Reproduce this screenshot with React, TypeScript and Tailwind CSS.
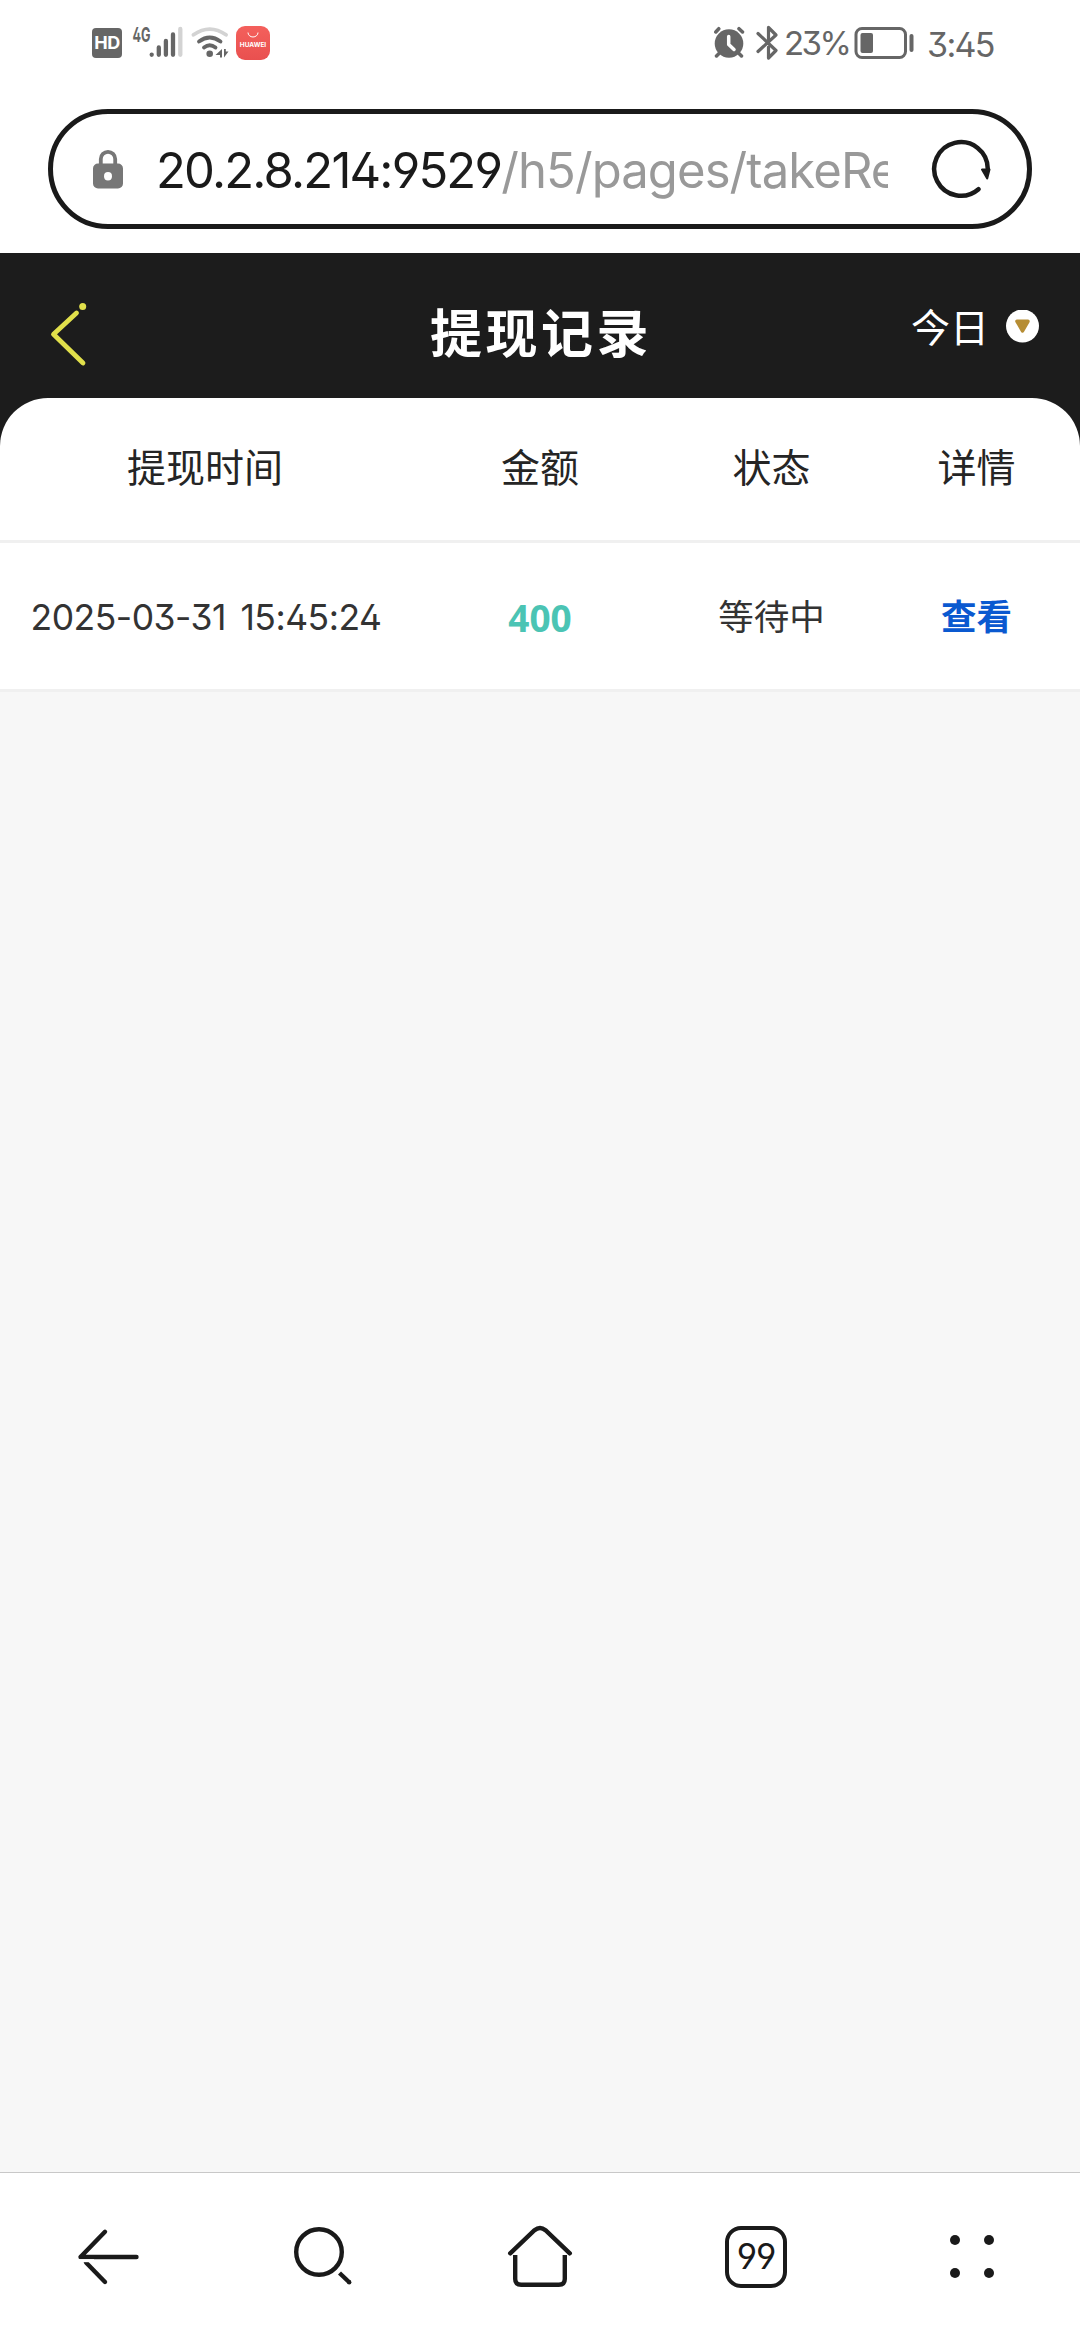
import React from "react";

const columns = ["提现时间", "金额", "状态", "详情"];

const records = [
  { id: 1, time: "2025-03-31 15:45:24", amount: 400, status: "等待中" },
];

const grid = "grid grid-cols-[410px_260px_203px_207px] items-center text-center";

function StatusBar() {
  return (
    <div className="flex h-[85px] items-center justify-between pr-[87px] pl-[92px] text-[#666]">
      <div className="flex items-center">
        <div className="flex h-[30px] w-[30px] items-center justify-center rounded-[4px] bg-[#666] text-[18px] font-bold tracking-[-0.500px] text-white">
          HD
        </div>
        <svg className="ml-[10px] overflow-visible" width="52" height="34" viewBox="0 0 52 34">
          <text x="0.5" y="16" fontSize="20" fontWeight="700" fill="#666" textLength="18" lengthAdjust="spacingAndGlyphs">4G</text>
          <g strokeWidth="4.3" strokeLinecap="round" stroke="#666">
            <path d="M19.700 28.600v.2M26.800 21.500v7.300M33.900 15v13.800M41 8.500v20.300" />
            <path stroke="#d3d3d3" d="M48.300 3v25.800" />
          </g>
        </svg>
        <svg className="ml-[7px]" width="38" height="34" viewBox="0 0 38 34" fill="none" strokeWidth="3.800" strokeLinecap="round">
          <path stroke="#d3d3d3" d="M2.500 8.800Q18.700 -2.500 35 8.800" />
          <path stroke="#666" d="M8 15.500Q18.700 7.500 29.500 15.500M13 21.500Q18.700 17 24.500 21.500" />
          <circle cx="18.700" cy="27.700" r="3.300" fill="#666" />
          <path fill="#666" d="M31 23v8.500h-2v-2.500h-4.500zM33 31.500v-8.500h1.800v2.500h2.700z" />
        </svg>
        <div className="ml-[7px] flex h-[34px] w-[34px] flex-col items-center rounded-[9px] bg-gradient-to-b from-[#f4605c] to-[#e9504f] text-white">
          <svg className="mt-[5px]" width="14" height="8" viewBox="0 0 14 8" fill="none" stroke="#fff" strokeWidth="1">
            <path d="M2 1.500a5 4.500 0 0 0 10 0" />
          </svg>
          <span className="mt-[3px] text-[6.500px] leading-[7px] font-bold">HUAWEI</span>
        </div>
      </div>

      <div className="flex items-center">
        <svg width="34" height="34" viewBox="0 0 34 34" fill="none" strokeLinecap="round" strokeLinejoin="round">
          <circle cx="15" cy="17.500" r="14.300" fill="#666" />
          <path stroke="#666" strokeWidth="3.500" d="M1.800 6l3-3.300M28.500 6l-3.500-3.300M5 27.500l-2.500 2.500M25 27.500l2.500 2.500" />
          <path stroke="#fff" strokeWidth="3.500" d="M14.700 10.500v8l5.300 5" />
        </svg>
        <svg className="ml-[8px]" width="24" height="36" viewBox="0 0 24 36" fill="none" stroke="#666" strokeWidth="3.200" strokeLinecap="round" strokeLinejoin="round">
          <path d="M2 8.500L20 25.500L12.500 33V22M2 26.500L20 10L12.500 2.500V14" />
        </svg>
        <span className="mt-[3px] ml-[4px] w-[63px] text-[33px] tracking-[-2.600px] whitespace-nowrap">23%</span>
        <svg className="ml-[7px]" width="60" height="34" viewBox="0 0 60 34">
          <rect x="2" y="2.500" width="49.500" height="29" rx="6" fill="none" stroke="#666" strokeWidth="3" />
          <rect x="6.500" y="7" width="12.500" height="20" rx="2" fill="#666" />
          <rect x="55.500" y="8" width="4" height="18" rx="2" fill="#666" />
        </svg>
        <span className="mt-[3px] ml-[13px] w-[66px] text-[34px] tracking-[-1.700px] whitespace-nowrap">3:45</span>
      </div>
    </div>
  );
}

function AddressBar() {
  return (
    <div className="mx-[48px] mt-[24px] flex h-[120px] items-center rounded-full border-[5px] border-[#1a1a1a] pl-[39px] text-[49px]">
      <svg className="shrink-0" width="32" height="40" viewBox="0 0 32 40">
        <path d="M8.800 16V10a7.200 7.200 0 0 1 14.400 0v6" fill="none" stroke="#777" strokeWidth="3.800" />
        <path fillRule="evenodd" fill="#777" d="M6 14.500h20a5 5 0 0 1 5 5v15a5 5 0 0 1-5 5h-20a5 5 0 0 1-5-5v-15a5 5 0 0 1 5-5zM16 23a4 4.200 0 1 0 0 8.400a4 4.200 0 1 0 0-8.400z" />
      </svg>
      <div className="mt-[4px] ml-[32px] w-[732px] overflow-hidden whitespace-nowrap">
        <span className="tracking-[-1.800px] text-[#1a1a1a]">20.2.8.214:9529</span>
        <span className="tracking-[-0.900px] text-[#999]">/h5/pages/takeRecord</span>
      </div>
      <svg className="ml-[42px] shrink-0" width="62" height="62" viewBox="0 0 62 62" fill="none" stroke="#1a1a1a" strokeWidth="4.500" strokeLinecap="round">
        <path d="M48.500 51.200A26.800 26.800 0 1 1 57.800 31" />
        <path fill="#1a1a1a" strokeWidth="2" strokeLinejoin="round" d="M52 31.500h7.500l-2.300 9z" />
      </svg>
    </div>
  );
}

function PageHeader() {
  return (
    <div className="grid h-[145px] grid-cols-[1fr_auto_1fr] items-start text-white">
      <svg className="mt-[48px] ml-[48px]" width="42" height="66" viewBox="0 0 42 66" fill="none">
        <circle cx="34.700" cy="5.400" r="3.500" fill="#e1e04b" />
        <path d="M28.500 12L5.500 33.300L35 62" stroke="#e1e04b" strokeWidth="4.800" strokeLinecap="round" strokeLinejoin="round" />
      </svg>
      <h1 className="mt-[46px] pl-[2px] text-[52px] leading-[72px] font-bold tracking-[3.500px]">提现记录</h1>
      <div className="mt-[48px] flex items-center justify-end pr-[41px]">
        <span className="mt-[2px] text-[39px] leading-[50px]">今日</span>
        <svg className="ml-[16px]" width="34" height="34" viewBox="0 0 34 34">
          <circle cx="17.500" cy="16" r="16.500" fill="#fff" />
          <path d="M12 11.300h11l-5.500 9.700z" fill="#b68d34" stroke="#b68d34" strokeWidth="3.500" strokeLinejoin="round" />
        </svg>
      </div>
    </div>
  );
}

function BottomNav() {
  return (
    <nav className="grid h-[168px] grid-cols-5 items-center justify-items-center border-t border-[#c8c8c8] bg-white">
      <svg width="64" height="64" viewBox="0 0 64 64" fill="none" stroke="#1a1a1a" strokeWidth="4.400" strokeLinecap="round">
        <path strokeLinejoin="round" d="M60.500 32H4.500L29 6.800" />
        <path d="M10 37.500L29 57" />
        <path stroke="#fff" strokeWidth="3" strokeLinecap="butt" d="M4 35.700h14" />
      </svg>
      <svg width="64" height="64" viewBox="0 0 64 64" fill="none" stroke="#1a1a1a" strokeWidth="4.400">
        <circle cx="27" cy="27" r="22.800" />
        <path d="M47.500 48L57.500 57.500" />
        <circle cx="57.200" cy="57.200" r="2.200" fill="#1a1a1a" stroke="none" />
      </svg>
      <svg width="66" height="64" viewBox="0 0 66 64" fill="none" stroke="#1a1a1a" strokeWidth="4.400" strokeLinecap="round">
        <path d="M3.200 28.300L27.500 5.200q5.500-4.500 11 0L62.800 28.300" />
        <path strokeLinecap="butt" d="M8.200 30V54q0 5.700 6 5.700H51.800q6 0 6-5.700V30" />
      </svg>
      <div className="flex h-[62px] w-[62px] items-center justify-center rounded-[16px] border-[4.500px] border-[#1a1a1a] text-[35px] leading-none tracking-[-1px] text-[#1a1a1a]">
        99
      </div>
      <div className="grid grid-cols-2 gap-x-[23.500px] gap-y-[22.500px]">
        {[0, 1, 2, 3].map((i) => (
          <span key={i} className="h-[10.500px] w-[10.500px] rounded-full bg-[#1a1a1a]" />
        ))}
      </div>
    </nav>
  );
}

export default function App() {
  return (
    <div className="flex h-[2340px] w-[1080px] flex-col overflow-hidden bg-white font-[Inter,'Noto_Sans_CJK_SC',sans-serif] [font-feature-settings:'ss01']">
      <div className="h-[253px] shrink-0">
        <StatusBar />
        <AddressBar />
      </div>

      <main className="flex flex-1 flex-col bg-[#f7f7f7]">
        <div className="bg-[#1c1c1c]">
          <PageHeader />
          <div className={`${grid} h-[145px] rounded-t-[48px] border-b-[3px] border-[#f0f0f0] bg-white pb-[2px] text-[39px] text-[#252525]`}>
            {columns.map((c) => (
              <div key={c}>{c}</div>
            ))}
          </div>
        </div>
        {records.map((r) => (
          <div key={r.id} className={`${grid} h-[149px] border-b-[3px] border-[#f0f0f0] bg-white pt-[4px] text-[35.500px] text-[#333]`}>
            <div className="pl-[2px] tracking-[-0.500px] whitespace-nowrap [word-spacing:5px]">{r.time}</div>
            <div className="font-['Noto_Sans',sans-serif] text-[37px] font-bold text-[#4bc4b4]">{r.amount}</div>
            <div>{r.status}</div>
            <a className="font-bold text-[#0a59d0]">查看</a>
          </div>
        ))}
      </main>

      <BottomNav />
    </div>
  );
}
